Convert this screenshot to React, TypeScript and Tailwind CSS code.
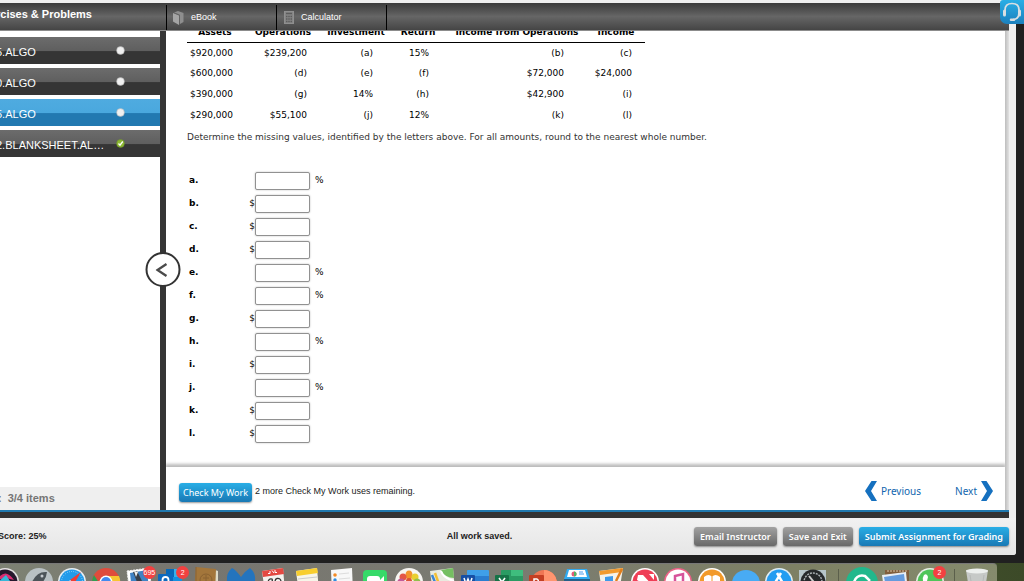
import React from "react";

const assignments = [
  { name: "5.ALGO", state: "open" },
  { name: "0.ALGO", state: "open" },
  { name: "5.ALGO", state: "current" },
  { name: "2.BLANKSHEET.AL…", state: "done" },
];

const rows = [
  ["$920,000", "$239,200", "(a)", "15%", "(b)", "(c)"],
  ["$600,000", "(d)", "(e)", "(f)", "$72,000", "$24,000"],
  ["$390,000", "(g)", "14%", "(h)", "$42,900", "(i)"],
  ["$290,000", "$55,100", "(j)", "12%", "(k)", "(l)"],
];

const columns = [
  { title: "Assets", width: "w-[56px]", pad: "pr-[10px]" },
  { title: "Operations", width: "w-[80px]", pad: "pr-[16px]" },
  { title: "Investment", width: "w-[66px]", pad: "pr-[16px]" },
  { title: "Return", width: "w-[58px]", pad: "pr-[18px]" },
  { title: "Income from Operations", width: "w-[140px]", pad: "pr-[23px]" },
  { title: "Income", width: "w-[58px]", pad: "pr-[13px]" },
];

const answers = [
  ["a", "%"], ["b", "$"], ["c", "$"], ["d", "$"], ["e", "%"], ["f", "%"],
  ["g", "$"], ["h", "%"], ["i", "$"], ["j", "%"], ["k", "$"], ["l", "$"],
];

function Header() {
  return (
    <header className="mr-[7px] flex h-[28px] shrink-0 border-b border-[#8c8c8c] bg-linear-to-b from-[#3b3b3b] via-[#666] to-[#454545] text-white">
      <h1 className="-ml-1 w-[170px] shrink-0 text-[11px] leading-[23px] font-bold whitespace-nowrap">rcises &amp; Problems</h1>
      <nav className="flex text-[9px]">
        <button className="mt-[2px] flex w-[110px] items-center gap-[7px] border-l border-black pl-[6px]">
          <svg width="11" height="14" viewBox="0 0 11 14">
            <path d="M0 2 6 4.500V14L0 10.500Z" fill="#a5a5a5" />
            <path d="M1 1.500 5 0 10.500 2V11L7 13V4Z" fill="#8e8e8e" />
            <path d="M1 1.700 6.500 4V13.500" fill="none" stroke="#666" strokeWidth=".7" />
          </svg>
          eBook
        </button>
        <button className="mt-[2px] flex w-[111px] items-center gap-[7px] border-x border-black pl-[7px]">
          <svg width="10" height="13" viewBox="0 0 10 13">
            <rect x=".5" y=".5" width="9" height="12" fill="#858585" stroke="#8f8f8f" />
            <path d="M2 2.500H8" stroke="#5c5c5c" strokeWidth="1.500" />
            <path d="M2 5.500H8M2 8H8M2 10.500H8" stroke="#5c5c5c" strokeWidth="1.300" strokeDasharray="1.500 .75" />
          </svg>
          Calculator
        </button>
      </nav>
    </header>
  );
}

function StatusDot({ done }: { done: boolean }) {
  return (
    <svg width="9" height="9" viewBox="0 0 9 9">
      <circle cx="4.500" cy="4.500" r="3.900" fill={done ? "#8cb832" : "#f0f0f0"} stroke={done ? "#6b8e2b" : "#aaa"} strokeWidth=".5" />
      {done && <path d="M2.500 4.500 4 6.200 6.800 2.500" fill="none" stroke="#fff" strokeWidth="1.300" />}
    </svg>
  );
}

function Sidebar() {
  return (
    <aside className="flex w-[160px] shrink-0 flex-col bg-white">
      <ul className="flex flex-1 flex-col gap-1 overflow-hidden pt-[6px]">
        {assignments.map((item, i) => (
          <li key={i}>
            <a
              href="#assignment"
              className={
                "flex h-[27px] items-center text-[11px] whitespace-nowrap text-white " +
                (item.state === "current"
                  ? "bg-[linear-gradient(#4fabe0_0,#4aa8de_50%,#2279b1_54%,#2279b1_100%)]"
                  : "bg-[linear-gradient(#6c6c6c_0,#5f5f5f_50%,#353535_54%,#353535_100%)]")
              }
            >
              <span className="-ml-1 w-[120px] pt-[3px]">{item.name}</span>
              <StatusDot done={item.state === "done"} />
            </a>
          </li>
        ))}
      </ul>
      <p className="flex h-[23px] shrink-0 items-center gap-[6px] bg-[#efefef] text-[11px] font-bold text-[#757575]">
        <span className="-ml-[2px]">:</span>
        <span>3/4 items</span>
      </p>
    </aside>
  );
}

function Chevron({ next = false }: { next?: boolean }) {
  return (
    <svg width="12" height="20" viewBox="0 0 12 20" fill="#1570bf">
      <path d={next ? "M0 0H5.500L12 10 5.500 20H0L6 10Z" : "M12 0H6.500L0 10 6.500 20H12L6 10Z"} />
    </svg>
  );
}

function Problem() {
  return (
    <div className="flex-1 overflow-hidden pl-[21px] font-['DejaVu_Sans',sans-serif] text-[9px] text-black">
      <table className="-mt-[7px] table-fixed border-collapse whitespace-nowrap">
        <thead>
          <tr className="h-[18px] border-b border-black">
            {columns.map((c) => (
              <th key={c.title} className={"p-0 align-top leading-[16px] " + c.width}>
                {c.title}
              </th>
            ))}
          </tr>
        </thead>
        <tbody>
          {rows.map((row) => (
            <tr key={row[0]} className="h-[21px]">
              {row.map((cell, i) => (
                <td key={i} className={"pt-px pb-0 pl-0 text-right " + columns[i].pad}>{cell}</td>
              ))}
            </tr>
          ))}
        </tbody>
      </table>
      <p className="mt-[3px] leading-[16px] whitespace-nowrap text-[#333]">
        Determine the missing values, identified by the letters above. For all amounts, round to the nearest whole number.
      </p>
      <div className="mt-[24px] ml-[2px]">
        {answers.map(([letter, unit]) => (
          <div key={letter} className="flex h-[23px] items-center">
            <label htmlFor={"answer-" + letter} className="w-[48px] font-bold">{letter}.</label>
            <span className="w-[18px] text-right">{unit === "$" ? "$" : ""}</span>
            <input id={"answer-" + letter} className="h-[18px] w-[55px] rounded-[2px] border border-[#919191] bg-white px-1 shadow-[0_0_2px_#bbb]" />
            <span className="ml-[5px]">{unit === "%" ? "%" : ""}</span>
          </div>
        ))}
      </div>
    </div>
  );
}

function CheckBar() {
  return (
    <div className="flex h-[43px] shrink-0 items-center bg-white pt-[7px] pr-[12px] pb-0 pl-[13px] shadow-[0_-2px_3px_1px_#bbb]">
      <button className="h-[19px] rounded-[3px] bg-linear-to-b from-[#29aee6] to-[#1979b5] px-1 font-['Noto_Sans',sans-serif] text-[9px] leading-[19px] whitespace-nowrap text-white shadow-[0_1px_2px_#999]">Check My Work</button>
      <span className="ml-[3px] text-[9px] text-[#222]">2 more Check My Work uses remaining.</span>
      <nav className="mb-[2px] ml-auto flex gap-[34px] font-['Noto_Sans',sans-serif] text-[10px] text-[#1165ae]">
        <a href="#previous" className="flex items-center gap-[4px]"><Chevron />Previous</a>
        <a href="#next" className="flex items-center gap-[4px]">Next<Chevron next /></a>
      </nav>
    </div>
  );
}

const footerButton =
  "h-[19px] rounded-[3px] px-[6px] font-['Noto_Sans',sans-serif] text-[9px] leading-[19px] font-semibold whitespace-nowrap text-white shadow-[0_1px_2px_#888] ";

function FooterBar() {
  return (
    <footer className="grid h-[37px] shrink-0 grid-cols-[1fr_auto_1fr] items-center bg-linear-to-b from-[#f1f1f1] to-[#e6e6e6] pr-[7px] text-[9px] font-bold text-[#222]">
      <span className="-ml-[2px]">Score: 25%</span>
      <span className="pr-[50px]">All work saved.</span>
      <span className="-ml-[50px] flex justify-end gap-[6px]">
        <button className={footerButton + "bg-linear-to-b from-[#a2a2a2] to-[#696969]"}>Email Instructor</button>
        <button className={footerButton + "bg-linear-to-b from-[#a2a2a2] to-[#696969]"}>Save and Exit</button>
        <button className={footerButton + "bg-linear-to-b from-[#29aee6] to-[#1979b5]"}>Submit Assignment for Grading</button>
      </span>
    </footer>
  );
}

/* Dock icons share a 34x18 box, centred on x = 17; the lower half of each icon is off screen. */
const dockIcons: React.ReactNode[] = [
  <><circle cx="17" cy="19" r="14" fill="#e4e0e2" /><circle cx="17" cy="19" r="12.500" fill="#25172d" /><path d="M9 17Q17 4 26 17L18 15Z" fill="#d92c72" /><path d="M11 18 18 12 22 18Z" fill="#37b7d9" /></>,
  <><circle cx="17" cy="19" r="14" fill="#b9c1c4" /><path d="M10 19Q15 8 25 9 24 18 16 23Z" fill="#4c5459" /><circle cx="20" cy="13" r="1.500" fill="#c6cbd0" /></>,
  <><circle cx="17" cy="19" r="14" fill="#e9eef1" /><circle cx="17" cy="19" r="12.500" fill="#219bea" /><circle cx="17" cy="19" r="10.500" fill="none" stroke="#b5e2ff" strokeDasharray=".7 1.500" /><path d="M26 9 15 17 19 21Z" fill="#ef3c35" /><path d="M15 17 19 21 8 28Z" fill="#fff" /></>,
  <><circle cx="17" cy="19" r="14" fill="#df4b3c" /><path d="M3 19A14 14 0 0 1 5 12L12 23Z" fill="#2f9e52" /><path d="M17 13H30A14 14 0 0 1 30 24Z" fill="#f6c530" /><circle cx="17" cy="19" r="6.500" fill="#fff" /><circle cx="17" cy="19" r="5" fill="#4289ef" /></>,
  <><path d="M4 8 26 5 29 28 7 31Z" fill="#fff" stroke="#eee" strokeDasharray="2 1" /><path d="M7 10 24 7 26 26 9 29Z" fill="#3f82c4" /><path d="M10 9 14 8 19 18 14 19Z" fill="#38404a" /><path d="M11 8 15 9 13 14Z" fill="#eee" /></>,
  <><path d="M10 6H26V30H10Z" fill="#1690df" /><path d="M10 6H18V14H10Z" fill="#0869b8" /><path d="M18 6H26V14H18Z" fill="#35b2ee" /><rect x="2" y="11" width="15" height="16" rx="1" fill="#0d69bd" /><circle cx="9.500" cy="17" r="3" fill="none" stroke="#fff" strokeWidth="1.800" /></>,
  <><path d="M22 6 28 8V18H22Z" fill="#dfdcc9" /><path d="M6 4 26 6 25 30 4 29Z" fill="#a3763b" /><path d="M6 4V29" stroke="#8a6232" strokeWidth="1" /><circle cx="16" cy="17" r="6" fill="none" stroke="#8a6232" /><path d="M16 12V18M13 15H19" stroke="#8a6232" /></>,
  <path d="M3 18Q2 10 8 5 12 7 17 14 21 8 26 5 32 10 31 18Z" fill="#2474bd" />,
  <><path d="M5 8 26 5 28 29 8 30Z" fill="#f4f2ee" /><path d="M5 8 26 5 27 11 6 14Z" fill="#e34942" /><path d="M13 8V10.500H11M15 7.500 17 10M18 7V9.500H20" fill="none" stroke="#fff" /><path d="M11 19Q12 15 15 16 16 18 14 19M20 15.500Q24 15 24 19H18Q18 16 20 15.500" fill="none" stroke="#333" strokeWidth="1.300" /></>,
  <><path d="M5 8 26 5 28 29 8 31Z" fill="#f7f5e9" /><path d="M5 8 26 5 27 10 6 13Z" fill="#f8ce2e" /><path d="M7 16 26 14" stroke="#ccc" /></>,
  <><path d="M6 7 27 5 28 29 7 31Z" fill="#f8f8f8" /><circle cx="10" cy="12" r="1.800" fill="#f48b25" /><circle cx="10" cy="17" r="1.700" fill="#2f8de0" /><path d="M14 11 24 10M14 16 25 15" stroke="#ddd" /></>,
  <><rect x="5" y="7" width="24" height="23" rx="4" fill="#36da69" /><rect x="9" y="13" width="13" height="12" rx="3" fill="#fff" /><path d="M22 17 26 13V24L22 21Z" fill="#fff" /></>,
  <><circle cx="17" cy="19" r="14" fill="#f6f5f2" /><ellipse cx="17" cy="12" rx="3.500" ry="4.500" fill="#f2942c" /><ellipse cx="23" cy="14" rx="3.500" ry="3.500" fill="#e9cf30" /><ellipse cx="11" cy="14" rx="3.500" ry="3.500" fill="#e45746" /><circle cx="25" cy="19" r="3.500" fill="#91bf4c" /><circle cx="9" cy="19" r="3.500" fill="#c15b9a" /><circle cx="17" cy="18" r="3" fill="#dc5539" /></>,
  <><path d="M4 8 27 5 29 28 7 31Z" fill="#e9eadf" /><path d="M15 7 27 5 28 15Q19 15 15 7Z" fill="#75bf61" /><path d="M9 10 14 24" stroke="#f4bf33" strokeWidth="2.500" /><path d="M6 12 11 24" stroke="#3c86d3" strokeWidth="2.500" /><path d="M15 8Q17 15 28 18" fill="none" stroke="#fff" strokeWidth="2" /></>,
  <><rect x="8" y="7" width="22" height="24" rx="1" fill="#3f9fe8" /><path d="M8 13H30V20H8Z" fill="#2a7dd0" /><rect x="2" y="12" width="14" height="14" rx="1" fill="#174fa4" /><path d="M5 15 7 21 9 16 11 21 13 15" fill="none" stroke="#fff" strokeWidth="1.500" /></>,
  <><rect x="8" y="7" width="22" height="24" rx="1" fill="#2a9b63" /><path d="M18 7H30V13H18Z" fill="#3fbd7d" /><rect x="2" y="12" width="14" height="14" rx="1" fill="#167347" /><path d="M6 15 12 23M12 15 6 23" stroke="#fff" strokeWidth="1.600" /></>,
  <><circle cx="17" cy="20" r="13" fill="#ef7754" /><path d="M17 7A13 13 0 0 1 30 20H17Z" fill="#ff956f" /><rect x="2" y="12" width="15" height="15" rx="1" fill="#c43f23" /><path d="M7 22V16H10Q13 18 9 20H7" fill="none" stroke="#fff" strokeWidth="1.500" /></>,
  <><path d="M7 6H27L30 16H4Z" fill="#32aaf0" /><path d="M9 7H25L27 14H7Z" fill="#fff" /><circle cx="14" cy="11" r="2.500" fill="#e55a7c" /><path d="M14 8.500A2.500 2.500 0 0 1 14 13.500" fill="#51b763" /><path d="M19 9H23M19 11H24" stroke="#4a9bea" /><path d="M4 16H30V18H4Z" fill="#24608a" /></>,
  <><path d="M5 8 29 5 25 30H8Z" fill="#f5f2e9" /><path d="M5 8 29 5 28 9 6 12Z" fill="#f29a2d" /><path d="M11 14 19 13V18H11Z" fill="#3e99e8" /><path d="M28 6 22 18" stroke="#df7f1e" strokeWidth="2.500" /></>,
  <><circle cx="17" cy="19" r="14" fill="#fff" /><circle cx="17" cy="19" r="12.500" fill="#ef3e56" /><path d="M10 12H15L25 23V27L9 17Z" fill="#fff" /><path d="M21 11H26V17Z" fill="#fff" /></>,
  <><circle cx="17" cy="19" r="14" fill="#ed6187" /><circle cx="17" cy="19" r="12.500" fill="#fff" /><path d="M14 23V13L22 11V21" fill="none" stroke="#d6539b" strokeWidth="2.500" /></>,
  <><circle cx="17" cy="19" r="14" fill="#fff" /><circle cx="17" cy="19" r="12.500" fill="#f29a29" /><path d="M9 14Q14 10 17 14 20 10 25 14V22H9Z" fill="#fff" /><path d="M17 14V22" stroke="#f29a29" /></>,
  <ellipse cx="17" cy="20" rx="14" ry="13" fill="#48abf4" />,
  <><circle cx="17" cy="19" r="14" fill="#e1edf4" /><circle cx="17" cy="19" r="12.500" fill="#239df1" /><path d="M15 10 22 22M19 10 11 23" stroke="#fff" strokeWidth="2.500" /></>,
  <><rect x="3" y="7" width="27" height="23" fill="#b6c6ca" /><circle cx="17" cy="19" r="12.500" fill="#25292b" /><circle cx="17" cy="19" r="9" fill="none" stroke="#a8b0b3" strokeWidth="1.500" strokeDasharray="2 1" /><path d="M13 13 21 23" stroke="#ccc" strokeWidth="2" /></>,
];

const recentIcons: React.ReactNode[] = [
  <><circle cx="17" cy="20" r="16" fill="#21b88c" /><path d="M9 19Q12 11 20 13L25 18" fill="none" stroke="#fff" strokeWidth="2.500" /></>,
  <><path d="M6 7H30V18H6Z" fill="#805e3c" /><path d="M8 8H29" stroke="#d9c5a7" strokeDasharray="2 1" /><path d="M3 12 27 9 28 19H4Z" fill="#e8eef5" /><path d="M5 14 25 11 26 19H6Z" fill="#659bdd" /></>,
  <><circle cx="17" cy="19" r="14" fill="#e9f0e9" /><circle cx="17" cy="19" r="12.500" fill="#4fc55a" /><path d="M11 12Q14 10 15 14L14 18H10Q9 15 11 12" fill="#fff" /></>,
];

function DockIcon({ children, badge }: { children: React.ReactNode; badge?: string }) {
  return (
    <span className="relative flex justify-center">
      <svg className="shrink-0" width="34" height="18" viewBox="0 0 34 18">{children}</svg>
      {badge && (
        <span className="absolute top-[3px] left-1/2 ml-[3px] h-[13px] min-w-[13px] rounded-full bg-[#f24141] px-[1px] text-center text-[7px] leading-[13px] text-white">{badge}</span>
      )}
    </span>
  );
}

function Dock() {
  return (
    <div className="flex h-[18px] shrink-0 overflow-hidden bg-[linear-gradient(90deg,#3e4728,#586137_50%,#3c4a28)]">
      <div className="-ml-3 flex flex-[0_0_1009px] rounded-tr-[4px] border-t border-[#777] bg-[linear-gradient(90deg,#7e8374,#77756f_20%,#7a7b72_50%,#7d8064_80%,#858b6d)]">
        <div className="-mt-px grid w-[842px] shrink-0 grid-cols-[repeat(25,minmax(0,1fr))]">
          {dockIcons.map((icon, i) => (
            <DockIcon key={i} badge={i === 4 ? "695" : i === 5 ? "2" : undefined}>{icon}</DockIcon>
          ))}
        </div>
        <div className="-mt-px ml-[8px] flex">
          <i className="mt-[6px] mr-[6px] w-px bg-[#5b5f4b]" />
          {recentIcons.map((icon, i) => (
            <DockIcon key={i} badge={i === 2 ? "2" : undefined}>{icon}</DockIcon>
          ))}
          <i className="mt-[6px] mr-[5px] ml-[7px] w-px bg-[#5b5f4b]" />
          <DockIcon><path d="M6 7H28L26 20H8Z" fill="#c6c9c7" /><ellipse cx="17" cy="8" rx="11" ry="2.500" fill="#ecefed" /><path d="M10 12 11 18M24 12 23 18" stroke="#b5b8b6" /></DockIcon>
        </div>
      </div>
    </div>
  );
}

export default function App() {
  return (
    <div className="relative flex h-screen flex-col overflow-hidden bg-[#202020] font-['Liberation_Sans',Arial,sans-serif]">
      <div className="mr-[8px] flex min-h-0 flex-1 flex-col overflow-hidden rounded-br-[3px] bg-[#efefef] pt-[3px]">
        <Header />
        <div className="mr-[7px] flex min-h-0 flex-1">
          <Sidebar />
          <div className="relative flex w-[6px] shrink-0 items-center bg-[#353535]">
            <button aria-label="Collapse assignment list" className="absolute top-[221px] left-1/2 z-10 flex size-[35px] -translate-x-1/2 items-center justify-center rounded-full border-2 border-[#333] bg-white pr-[3px]">
              <svg width="12" height="14" viewBox="0 0 12 14" fill="none" stroke="#4a4a4a" strokeWidth="2.300"><path d="M11 1 2 7 11 13" /></svg>
            </button>
          </div>
          <main className="flex min-w-0 flex-1 flex-col bg-white">
            <Problem />
            <CheckBar />
          </main>
          <div className="w-[4px] shrink-0 bg-linear-to-r from-[#bdbdbd] to-[#e2e2e2]" />
        </div>
        <div className="mr-[7px] h-[8px] shrink-0 border-t-2 border-[#1f78ae] bg-[#333]" />
        <FooterBar />
      </div>
      <div className="h-[8px] shrink-0 bg-[#202020]" />
      <Dock />
      <button aria-label="Support" className="absolute top-0 right-0 flex h-[24px] w-[24px] items-center justify-center rounded-tl-[3px] rounded-bl-[7px] bg-linear-to-b from-[#29aee6] to-[#1c80bd]">
        <svg width="20" height="20" viewBox="0 0 20 20" fill="none" stroke="#d9dfe2" strokeWidth="1.700">
          <path d="M3 11V8Q3 1.500 10 1.500T17 8V11Q17 17 11 17.500" />
          <path d="M2.500 9V13M17.500 9V13" strokeWidth="3" strokeLinecap="round" />
          <path d="M9 17.700H12" strokeWidth="2.500" strokeLinecap="round" />
        </svg>
      </button>
    </div>
  );
}
